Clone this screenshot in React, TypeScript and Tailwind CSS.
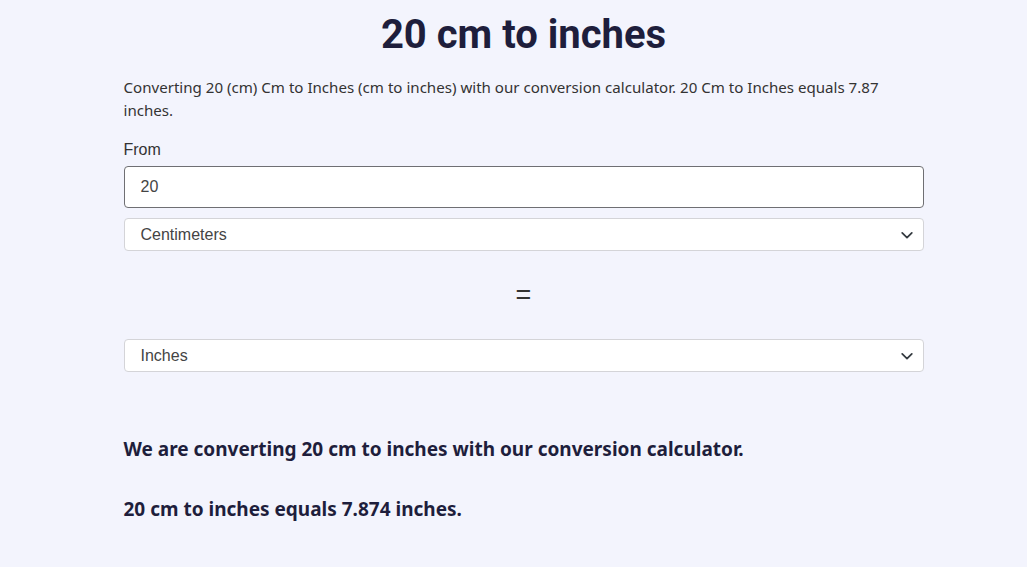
function Chevron() {
  return (
    <svg width="14" height="14" viewBox="0 0 16 16" fill="none" className="shrink-0">
      <path d="M2.5 5.5 8 11l5.5-5.5" stroke="#343a40" strokeWidth="2" strokeLinecap="round" strokeLinejoin="round" />
    </svg>
  );
}

function UnitSelect({ label }: { label: string }) {
  return (
    <div className="flex h-[33px] items-center justify-between rounded-[4px] border border-[#d4d4d8] bg-white pl-4 pr-[9px] font-['Liberation_Sans',Arial,sans-serif] text-[16px] text-[#444]">
      <span>{label}</span>
      <Chevron />
    </div>
  );
}

export default function App() {
  return (
    <div className="min-h-[567px] bg-[#f3f4fd] pl-5">
      <div className="mx-auto w-[800px] pt-[12px]">
        <h1 className="text-center font-['Roboto',sans-serif] text-[40px] font-bold leading-[46px] text-[#1e1e3c]">
          20 cm to inches
        </h1>

        <p className="mt-[18px] max-w-[785px] font-['Noto_Sans',sans-serif] text-[15.1px] leading-[23px] text-[#333]">
          Converting 20 (cm) Cm to Inches (cm to inches) with our conversion calculator. 20 Cm to Inches equals 7.87
          inches.
        </p>

        <div className="mt-[17px] font-['Liberation_Sans',Arial,sans-serif] text-[16px] leading-[22px] text-[#333]">
          From
        </div>

        <div className="mt-[5px] flex h-[42px] items-center rounded-[4px] border border-[#6f6f73] bg-white px-4 font-['Liberation_Sans',Arial,sans-serif] text-[16px] text-[#444]">
          20
        </div>

        <div className="mt-[10px]">
          <UnitSelect label="Centimeters" />
        </div>

        <div className="flex h-[88px] items-center justify-center font-['Liberation_Sans',Arial,sans-serif] text-[27px] text-[#333]">
          =
        </div>

        <UnitSelect label="Inches" />

        <div className="mt-[62px] font-['Noto_Sans',sans-serif] text-[19px] font-bold leading-[30px] text-[#1e1e3c]">
          We are converting 20 cm to inches with our conversion calculator.
        </div>

        <div className="mt-[30px] font-['Noto_Sans',sans-serif] text-[19px] font-bold leading-[30px] text-[#1e1e3c]">
          20 cm to inches equals 7.874 inches.
        </div>
      </div>
    </div>
  );
}
